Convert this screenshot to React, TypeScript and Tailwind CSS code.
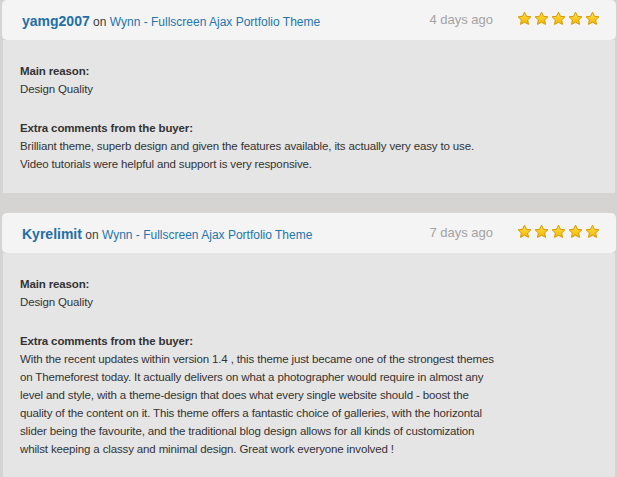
import React from "react";

interface Review {
  user: string;
  item: string;
  when: string;
  reason: string;
  comment: string[];
}

const REVIEWS: Review[] = [
  {
    user: "yamg2007",
    item: "Wynn - Fullscreen Ajax Portfolio Theme",
    when: "4 days ago",
    reason: "Design Quality",
    comment: [
      "Brilliant theme, superb design and given the features available, its actually very easy to use.",
      "Video tutorials were helpful and support is very responsive.",
    ],
  },
  {
    user: "Kyrelimit",
    item: "Wynn - Fullscreen Ajax Portfolio Theme",
    when: "7 days ago",
    reason: "Design Quality",
    comment: [
      "With the recent updates within version 1.4 , this theme just became one of the strongest themes",
      "on Themeforest today. It actually delivers on what a photographer would require in almost any",
      "level and style, with a theme-design that does what every single website should - boost the",
      "quality of the content on it. This theme offers a fantastic choice of galleries, with the horizontal",
      "slider being the favourite, and the traditional blog design allows for all kinds of customization",
      "whilst keeping a classy and minimal design. Great work everyone involved !",
    ],
  },
];

function Star() {
  return (
    <svg width="15" height="15" viewBox="0 0 24 24" aria-hidden>
      <defs>
        <linearGradient id="starFill" x1="0" y1="0" x2="0" y2="1">
          <stop offset="0" stopColor="#ffe14a" />
          <stop offset="1" stopColor="#f7b500" />
        </linearGradient>
      </defs>
      <path
        d="M12 1.8l3.1 6.6 7.2.9-5.3 5 1.4 7.1L12 17.9l-6.4 3.5 1.4-7.1-5.3-5 7.2-.9z"
        fill="url(#starFill)"
        stroke="#d49a00"
        strokeWidth="1.6"
        strokeLinejoin="round"
      />
    </svg>
  );
}

function ReviewCard({ review }: { review: Review }) {
  return (
    <div>
      <div className="mx-[2px] flex h-10 items-center rounded-[5px] bg-[#f4f4f4] pl-5 pr-4">
        <div className="flex-1 pt-[2px] text-[12px] text-[#3d3d3d]">
          <span className="text-[14px] font-bold text-[#1f6fa8]">{review.user}</span>{" "}
          on <span className="text-[#2475ae]">{review.item}</span>
        </div>
        <span className="mr-[24px] text-[13px] text-[#a3a3a3]">{review.when}</span>
        <div className="-mt-1 flex gap-[2px]">
          {[0, 1, 2, 3, 4].map((i) => (
            <Star key={i} />
          ))}
        </div>
      </div>
      <div className="mx-[3px] bg-[#e5e5e5] pb-5 pl-[17px] pt-[22px] text-[11.5px] leading-[18px] tracking-[-0.14px] text-[#333333]">
        <p className="font-bold">Main reason:</p>
        <p>{review.reason}</p>
        <p className="mt-[21px] font-bold">Extra comments from the buyer:</p>
        {review.comment.map((line) => (
          <p key={line} className="whitespace-nowrap">
            {line}
          </p>
        ))}
      </div>
    </div>
  );
}

export default function App() {
  return (
    <div
      className="flex h-[477px] flex-col gap-5 overflow-hidden bg-[#d5d4d2]"
      style={{ fontFamily: '"Liberation Sans", Arial, sans-serif' }}
    >
      {REVIEWS.map((review) => (
        <ReviewCard key={review.user} review={review} />
      ))}
    </div>
  );
}
